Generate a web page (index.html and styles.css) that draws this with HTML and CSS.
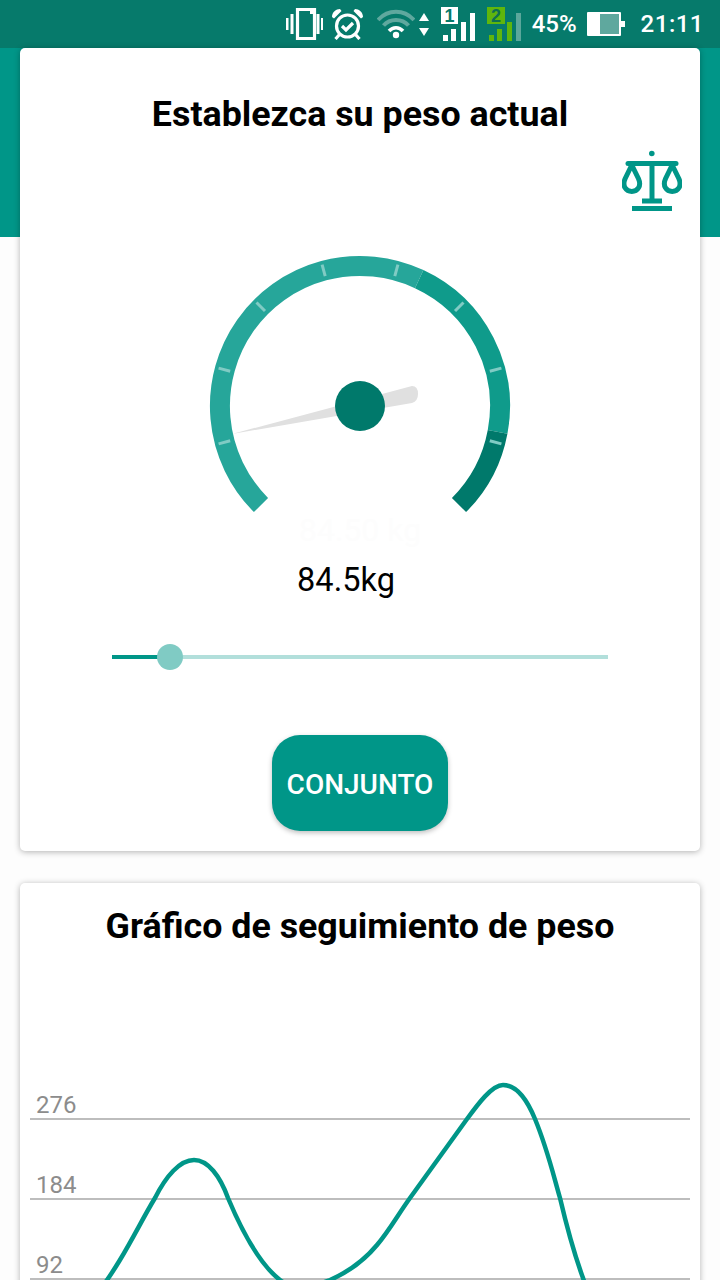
FILE: index.html
```html
<!DOCTYPE html>
<html lang="es">
<head>
<meta charset="utf-8">
<title>Peso</title>
<link rel="stylesheet" href="styles.css">
</head>
<body>
<div class="app">
  <header class="status">
    <svg class="ic-vib" viewBox="0 0 37 32" aria-hidden="true">
      <path class="st-line" d="M11.500 1.500H28.500V30.500H11.500Z"/>
      <path class="st-fill" d="M11 1H29V6H24V3H11Z"/>
      <path class="st-fill" d="M0 10h2.500v12H0zM4.500 6h3v20h-3zM30.500 6h3v20h-3zM35 10h2v12h-2z"/>
    </svg>
    <svg class="ic-alarm" viewBox="0 0 33 32" aria-hidden="true">
      <circle class="st-line" cx="16.500" cy="18" r="11"/>
      <path class="st-line" d="M11 18l4 4 7-7"/>
      <path class="st-fill" d="M1 9C1 4 5 1 9 1L10.500 3 3 10.500ZM32 9C32 4 28 1 24 1L22.500 3 30 10.500Z"/>
      <path class="st-line" d="M8.500 26.500L4.500 31M24.500 26.500L28.500 31"/>
    </svg>
    <svg class="ic-wifi" viewBox="0 0 38 30" aria-hidden="true">
      <path class="st-dim" d="M1 11C11 0 27 0 37 11"/>
      <path class="st-dim" d="M6.500 16.500C13 9 25 9 31.500 16.500"/>
      <path class="st-bright" d="M12 22C16 17.500 22 17.500 26 22"/>
      <circle class="st-fill" cx="19" cy="26" r="3.200"/>
    </svg>
    <svg class="ic-arrows" viewBox="0 0 10 23" aria-hidden="true">
      <path class="st-fill" d="M5 0l5 8H0zM5 23l5-8H0z"/>
    </svg>
    <svg class="ic-sim" viewBox="0 0 35 36" aria-hidden="true">
      <rect class="st-fill" x="1" y="1" width="17" height="17"/>
      <text class="sim-num sim-num-one" x="9.500" y="16">1</text>
      <path class="st-fill" d="M3 29h5v6H3zM11 23h5v12h-5zM21 16h5v19h-5zM30 7h5v28h-5z"/>
    </svg>
    <svg class="ic-sim" viewBox="0 0 35 36" aria-hidden="true">
      <rect class="sim-green" x="0" y="1" width="18" height="17"/>
      <text class="sim-num sim-num-two" x="9" y="16">2</text>
      <path class="sim-green" d="M2 29h5v6H2zM10 23h5v12h-5zM20 16h5v19h-5z"/>
      <path class="sim-dim" d="M29 7h5v28h-5z"/>
    </svg>
    <span class="st-pct">45%</span>
    <svg class="ic-batt" viewBox="0 0 38 24" aria-hidden="true">
      <rect class="st-fill" x="0" y="0" width="34" height="24" rx="1"/>
      <rect class="batt-empty" x="13" y="2" width="19" height="20"/>
      <rect class="st-fill" x="34" y="9" width="4" height="6"/>
    </svg>
    <span class="st-time">21:11</span>
  </header>

  <div class="band"></div>

  <main class="content">
    <section class="card card-set">
      <h1 class="card-title">Establezca su peso actual</h1>
      <svg class="ic-scale" viewBox="622 150 60 62" aria-hidden="true">
        <circle class="sc-fill" cx="651.800" cy="153.500" r="2.800"/>
        <path class="sc-line" d="M628 163.500H676"/>
        <path class="sc-line sc-thick" d="M652 163V200"/>
        <path class="sc-fill" d="M642 198.500h20v5h-20zM632 206h40v5h-40z"/>
        <path class="sc-line" d="M631.800 165L625.200 178.500C621.800 186 626 191.500 631.800 191.500C637.600 191.500 641.800 186 638.400 178.500Z"/>
        <path class="sc-line" d="M672.200 165L665.600 178.500C662.200 186 666.400 191.500 672.200 191.500C678 191.500 682.200 186 678.800 178.500Z"/>
      </svg>
      <svg class="gauge" viewBox="190 240 340 310" aria-hidden="true">
        <path class="seg seg-a" d="M261 505A140 140 0 0 1 419.200 279.100"/>
        <path class="seg seg-b" d="M419.200 279.100A140 140 0 0 1 497.600 431.800"/>
        <path class="seg seg-c" d="M497.600 431.800A140 140 0 0 1 459 505"/>
        <g class="ticks">
          <path d="M230.200 440.800L218.600 443.900"/>
          <path d="M230.200 371.200L218.600 368.100"/>
          <path d="M265 311L256.500 302.500"/>
          <path d="M325.200 276.200L322.100 264.600"/>
          <path d="M394.800 276.200L397.900 264.600"/>
          <path d="M455 311L463.500 302.500"/>
          <path d="M489.800 371.200L501.400 368.100"/>
          <path d="M489.800 440.800L501.400 443.900"/>
        </g>
        <path class="needle" d="M232 434L412 386Q418 386 418 394Q418 401 412 403Z"/>
        <circle class="hub" cx="360" cy="406" r="25"/>
        <text class="ghost" x="360" y="541">84.50 kg</text>
      </svg>
      <div class="value">84.5kg</div>
      <div class="slider">
        <div class="slider-track">
          <div class="slider-fill" style="width:58px"></div>
        </div>
        <div class="slider-thumb" style="left:58px"></div>
      </div>
      <button class="btn" type="button">CONJUNTO</button>
    </section>

    <section class="card card-chart">
      <h2 class="card-title">Gráfico de seguimiento de peso</h2>
      <svg class="chart" viewBox="20 946 680 400" aria-hidden="true">
        <path class="grid" d="M30 1119H690M30 1199H690M30 1279H690"/>
        <text class="axis" x="36" y="1113">276</text>
        <text class="axis" x="36" y="1193">184</text>
        <text class="axis" x="36" y="1273">92</text>
        <path class="curve" d="M96 1295C122 1262 138 1226 155 1198C166 1176 180 1160 194 1160C208 1160 220 1176 228 1198C244 1236 262 1266 280 1280C296 1292 312 1287 330 1280C346 1273 362 1263 377 1245C389 1231 398 1214.600 410 1198L467 1119C478 1104 492 1085 503 1085C517 1085 528 1102 535 1119C547 1148 552 1170 560 1198C568 1232 575 1256 583 1278L590 1298"/>
      </svg>
    </section>
  </main>
</div>
</body>
</html>
```
FILE: styles.css
```css
* { box-sizing: border-box; }
html, body { margin: 0; padding: 0; }
body { background: #fdfdfd; font-family: Roboto, "Noto Sans", sans-serif; }
.app { width: 720px; height: 1280px; overflow: hidden; background: #fdfdfd; }

.status { height: 48px; background: #067a6b; display: flex; align-items: center; justify-content: flex-end; padding-right: 16px; color: #fff; }
.status svg { display: block; flex: none; }
.ic-vib { width: 37px; height: 32px; margin-right: 8px; }
.ic-alarm { width: 33px; height: 32px; margin-right: 13px; }
.ic-wifi { width: 38px; height: 30px; margin-right: 4px; }
.ic-arrows { width: 10px; height: 23px; margin-right: 11px; }
.ic-sim { width: 35px; height: 36px; margin-right: 12px; }
.ic-batt { width: 38px; height: 24px; margin-right: 16px; }
.st-pct { font-size: 24px; font-weight: 500; margin-left: -2px; margin-right: 10px; letter-spacing: 0; }
.st-time { font-size: 24px; font-weight: 500; letter-spacing: .5px; }
.st-line { fill: none; stroke: #fff; stroke-width: 3.200; }
.st-fill { fill: #fff; }
.st-dim { fill: none; stroke: #5fa89e; stroke-width: 4; }
.st-bright { fill: none; stroke: #fff; stroke-width: 3.500; }
.sim-num { font-family: "Liberation Sans", sans-serif; font-weight: 700; font-size: 18px; text-anchor: middle; }
.sim-num-one { fill: #067a6b; }
.sim-num-two { fill: #0d6f52; }
.sim-green { fill: #5fb60c; }
.sim-dim { fill: #5ba79b; }
.batt-empty { fill: #5fa89e; }

.band { height: 189px; background: #009688; }
.content { margin-top: -189px; padding: 0 20px; }

.card { background: #fff; border-radius: 5px; box-shadow: 0 1px 6px rgba(0, 0, 0, .3); display: flex; flex-direction: column; align-items: center; }
.card-set { padding: 46px 0 20px; }
.card-chart { margin-top: 32px; padding-top: 23px; height: 480px; }
.card-title { margin: 0; font-size: 35.800px; line-height: 40px; font-weight: 700; color: #000; text-align: center; letter-spacing: 0; }

.ic-scale { display: block; width: 60px; height: 62px; margin-top: 16px; align-self: flex-end; margin-right: 18px; }
.sc-fill { fill: #009688; }
.sc-line { fill: none; stroke: #009688; stroke-width: 5; stroke-linejoin: round; stroke-linecap: round; }
.sc-thick { stroke-width: 5; stroke-linecap: butt; }

.gauge { display: block; width: 340px; height: 310px; margin-top: 28px; }
.seg { fill: none; stroke-width: 20; }
.seg-a { stroke: #26a69a; }
.seg-b { stroke: #0f9b8b; }
.seg-c { stroke: #00796b; }
.ticks path { fill: none; stroke: #80cbc4; stroke-width: 3; }
.needle { fill: #e0e0e0; }
.hub { fill: #00796b; }
.ghost { fill: #fdfdfd; font-size: 32px; text-anchor: middle; }

.value { margin-top: 10px; height: 40px; line-height: 40px; font-size: 32.500px; color: #000; transform: translateX(-14px); }

.slider { position: relative; width: 496px; height: 26px; margin-top: 44px; display: flex; align-items: center; }
.slider-track { width: 100%; height: 4px; background: #b2dfdb; }
.slider-fill { height: 100%; background: #009688; }
.slider-thumb { position: absolute; top: 0; width: 26px; height: 26px; margin-left: -13px; border-radius: 50%; background: #80cbc4; }

.btn { display: block; width: 176px; height: 96px; margin-top: 65px; border: 0; border-radius: 28px; background: #009688; color: #fff; font: 500 28px/1 Roboto, sans-serif; box-shadow: 0 2px 5px rgba(0, 0, 0, .25); padding: 3px 0 0; }

.chart { display: block; width: 680px; height: 400px; flex: none; }
.grid { fill: none; stroke: #bdbdbd; stroke-width: 2; }
.axis { fill: #8c8c8c; font-size: 24px; }
.curve { fill: none; stroke: #009688; stroke-width: 4.500; }
```
